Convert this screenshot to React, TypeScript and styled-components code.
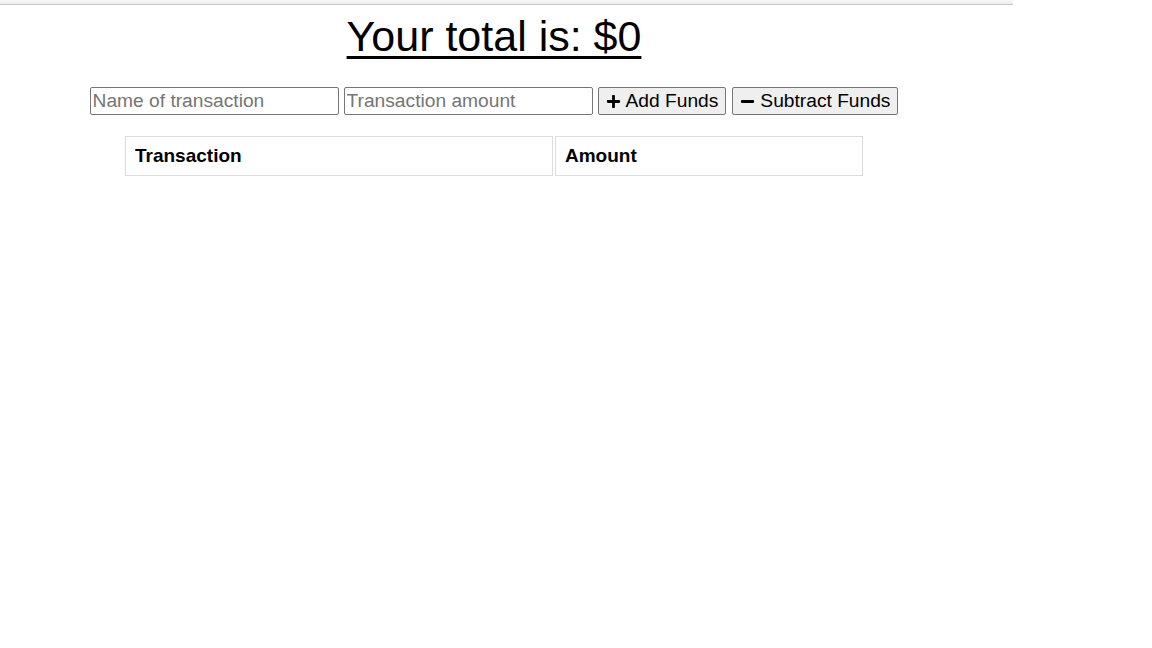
import React from "react";
import styled, { createGlobalStyle } from "styled-components";
import { FaPlus, FaMinus } from "react-icons/fa";

const Global = createGlobalStyle`
  html, body { margin: 0; padding: 0; background: #fff; }
  body { font-family: "Liberation Sans", Arial, sans-serif; color: #000; }
`;

const TopBar = styled.div`
  width: 1013px;
  height: 4px;
  background: linear-gradient(#f7f7f7, #ececec);
  border-bottom: 1px solid #c9c9c9;
`;

const Page = styled.div`
  width: 988px;
  display: flex;
  flex-direction: column;
  align-items: center;
`;

const Title = styled.h1`
  margin: 8px 0 0;
  font-size: 43px;
  font-weight: 400;
  line-height: 47px;
  text-decoration: underline;
  text-decoration-thickness: 3px;
  text-underline-offset: 5px;
`;

const Form = styled.div`
  display: flex;
  align-items: center;
  gap: 5px;
  margin-top: 27px;
  height: 28px;
`;

const Input = styled.input`
  box-sizing: border-box;
  width: 249px;
  height: 28px;
  padding: 0 2px;
  border: 1px solid #767676;
  border-radius: 2px;
  font-family: "Liberation Sans", Arial, sans-serif;
  font-size: 19.2px;
  color: #000;
  &::placeholder { color: #757575; }
`;

const Button = styled.button<{ $ml?: number }>`
  box-sizing: border-box;
  height: 28px;
  display: flex;
  align-items: center;
  gap: 5px;
  padding: 0 7px;
  margin-left: ${(p) => p.$ml ?? 0}px;
  border: 1px solid #767676;
  border-radius: 2px;
  background: #efefef;
  font-family: "Liberation Sans", Arial, sans-serif;
  font-size: 19.2px;
  color: #000;
  svg { width: 15px; height: 15px; }
`;

const Table = styled.table`
  margin-top: 19px;
  border-spacing: 2px;
  border-collapse: separate;
`;

const Th = styled.th<{ $w: number }>`
  box-sizing: border-box;
  width: ${(p) => p.$w}px;
  height: 40px;
  padding: 0 9px;
  border: 1px solid #dcdcdc;
  text-align: left;
  font-size: 19px;
  font-weight: 700;
`;

export default function App() {
  return (
    <>
      <Global />
      <TopBar />
      <Page>
        <Title>Your total is: $0</Title>
        <Form>
          <Input placeholder="Name of transaction" />
          <Input placeholder="Transaction amount" />
          <Button>
            <FaPlus />
            Add Funds
          </Button>
          <Button $ml={1}>
            <FaMinus />
            Subtract Funds
          </Button>
        </Form>
        <Table>
          <thead>
            <tr>
              <Th $w={428}>Transaction</Th>
              <Th $w={308}>Amount</Th>
            </tr>
          </thead>
          <tbody />
        </Table>
      </Page>
    </>
  );
}
